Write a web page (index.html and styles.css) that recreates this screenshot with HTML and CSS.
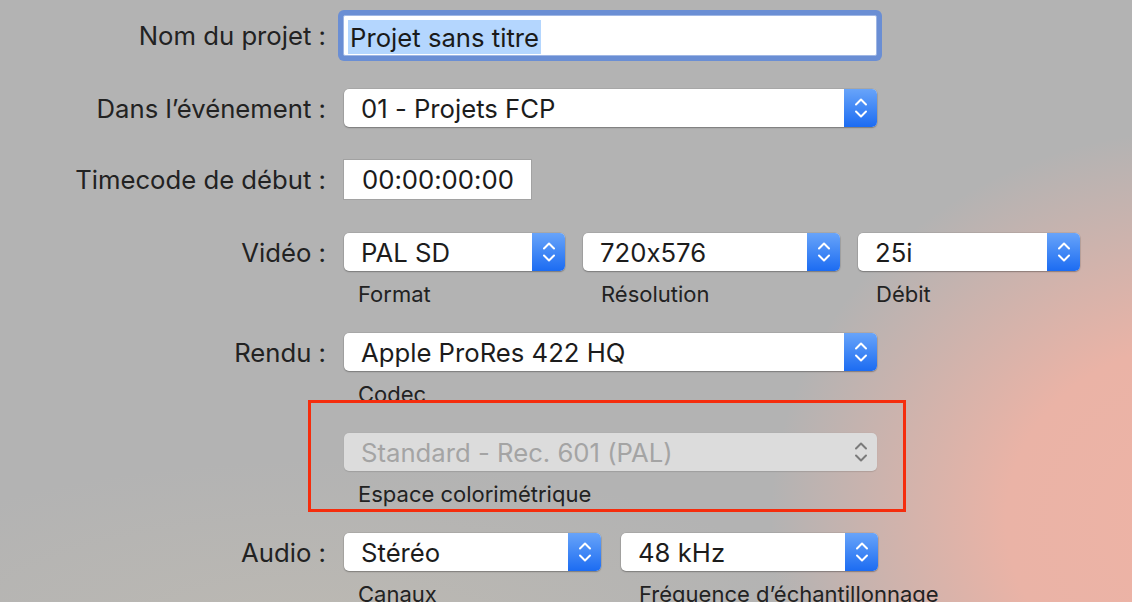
FILE: index.html
```html
<!DOCTYPE html>
<html lang="fr">
<head>
<meta charset="utf-8">
<title>Nouveau projet</title>
<link rel="stylesheet" href="styles.css">
</head>
<body>
<div class="form">
  <div class="row row-name">
    <div class="label tall">Nom du projet :</div>
    <div class="textfield focused"><span class="sel">Projet sans titre</span></div>
  </div>

  <div class="row row-event">
    <div class="label">Dans l’événement :</div>
    <div class="controls">
      <div class="popup wide">
        <span class="value">01 - Projets FCP</span>
        <span class="stepper"><svg viewBox="0 0 14 22" width="14" height="22"><path d="M2 7.5 7 2.5 12 7.5M2 14.5 7 19.5 12 14.5"/></svg></span>
      </div>
    </div>
  </div>

  <div class="row row-tc">
    <div class="label tall">Timecode de début :</div>
    <div class="textfield tc">00:00:00:00</div>
  </div>

  <div class="row row-video">
    <div class="label">Vidéo :</div>
    <div class="controls">
      <div class="group">
        <div class="popup w-format">
          <span class="value">PAL SD</span>
          <span class="stepper"><svg viewBox="0 0 14 22" width="14" height="22"><path d="M2 7.5 7 2.5 12 7.5M2 14.5 7 19.5 12 14.5"/></svg></span>
        </div>
        <div class="caption">Format</div>
      </div>
      <div class="group">
        <div class="popup w-res">
          <span class="value">720x576</span>
          <span class="stepper"><svg viewBox="0 0 14 22" width="14" height="22"><path d="M2 7.5 7 2.5 12 7.5M2 14.5 7 19.5 12 14.5"/></svg></span>
        </div>
        <div class="caption shift">Résolution</div>
      </div>
      <div class="group">
        <div class="popup w-rate">
          <span class="value">25i</span>
          <span class="stepper"><svg viewBox="0 0 14 22" width="14" height="22"><path d="M2 7.5 7 2.5 12 7.5M2 14.5 7 19.5 12 14.5"/></svg></span>
        </div>
        <div class="caption shift">Débit</div>
      </div>
    </div>
  </div>

  <div class="row row-rendu">
    <div class="label">Rendu :</div>
    <div class="controls">
      <div class="group">
        <div class="popup wide">
          <span class="value">Apple ProRes 422 HQ</span>
          <span class="stepper"><svg viewBox="0 0 14 22" width="14" height="22"><path d="M2 7.5 7 2.5 12 7.5M2 14.5 7 19.5 12 14.5"/></svg></span>
        </div>
        <div class="caption">Codec</div>
      </div>
    </div>
  </div>

  <div class="row row-space">
    <div class="label"></div>
    <div class="controls">
      <div class="group">
        <div class="popup wide disabled">
          <span class="value">Standard - Rec. 601 (PAL)</span>
          <span class="stepper"><svg viewBox="0 0 14 22" width="14" height="22"><path d="M2 7.5 7 2.5 12 7.5M2 14.5 7 19.5 12 14.5"/></svg></span>
        </div>
        <div class="caption">Espace colorimétrique</div>
      </div>
    </div>
  </div>

  <div class="row row-audio">
    <div class="label">Audio :</div>
    <div class="controls audio">
      <div class="group">
        <div class="popup w-half">
          <span class="value">Stéréo</span>
          <span class="stepper"><svg viewBox="0 0 14 22" width="14" height="22"><path d="M2 7.5 7 2.5 12 7.5M2 14.5 7 19.5 12 14.5"/></svg></span>
        </div>
        <div class="caption">Canaux</div>
      </div>
      <div class="group">
        <div class="popup w-half">
          <span class="value">48 kHz</span>
          <span class="stepper"><svg viewBox="0 0 14 22" width="14" height="22"><path d="M2 7.5 7 2.5 12 7.5M2 14.5 7 19.5 12 14.5"/></svg></span>
        </div>
        <div class="caption shift">Fréquence d’échantillonnage</div>
      </div>
    </div>
  </div>

  <div class="highlight-box"></div>
</div>
</body>
</html>
```

FILE: styles.css
```css
html, body {
  margin: 0;
  padding: 0;
}

body {
  width: 1132px;
  height: 602px;
  overflow: hidden;
  font-family: Inter, "Helvetica Neue", "Liberation Sans", sans-serif;
  font-feature-settings: "calt" 0;
  color: #222;
  background:
    radial-gradient(ellipse 430px 390px at 1200px 520px, #eeb3a5 0%, #eab3a6 45%, rgba(234, 179, 166, 0) 100%),
    radial-gradient(ellipse 520px 180px at 320px 640px, rgba(196, 190, 178, 0.55), rgba(179, 179, 179, 0)),
    #b3b3b3;
}

.form {
  position: relative;
  padding-top: 15px;
}

.row {
  display: flex;
  column-gap: 17px;
  align-items: flex-start;
}

.label {
  flex: none;
  width: 326px;
  height: 38px;
  line-height: 39px;
  text-align: right;
  font-size: 25.7px;
  color: #222;
  white-space: nowrap;
}

.label.tall {
  height: 41px;
  line-height: 42px;
}

.row-name { margin-bottom: 33px; }
.row-event { margin-bottom: 32px; }
.row-tc { margin-bottom: 33px; }
.row-video,
.row-rendu,
.row-space { margin-bottom: 26px; }

.controls {
  display: flex;
  column-gap: 18px;
  padding-left: 1px;
}

.controls.audio {
  column-gap: 20px;
}

.group {
  display: flex;
  flex-direction: column;
}

/* Text fields */
.textfield {
  box-sizing: border-box;
  height: 41px;
  background: #fff;
  font-size: 25.7px;
  color: #1a1a1a;
  white-space: nowrap;
}

.textfield.focused {
  width: 534px;
  border: 1px solid #9fb6e4;
  border-radius: 2px;
  box-shadow: 0 0 0 5px #6a8ed4;
  padding: 4px 0 0 4px;
}

.sel {
  display: inline-block;
  background: #b4d6fe;
  height: 34px;
  line-height: 35px;
  padding: 0 2px 0 2px;
}

.textfield.tc {
  width: 189px;
  border: 1px solid #a2a2a2;
  line-height: 40px;
  padding-left: 18px;
}

/* Pop-up buttons */
.popup {
  display: flex;
  height: 38px;
  background: #fff;
  border-radius: 5px;
  box-shadow: 0 1px 1.5px rgba(0, 0, 0, 0.28), 0 0 0 0.5px rgba(0, 0, 0, 0.12);
  overflow: hidden;
}

.popup.wide { width: 533px; }
.popup.w-format { width: 221px; }
.popup.w-res { width: 257px; }
.popup.w-rate { width: 222px; }
.popup.w-half { width: 257px; }

.popup .value {
  flex: 1;
  padding-left: 17px;
  font-size: 25.7px;
  line-height: 39px;
  color: #1c1c1c;
  white-space: nowrap;
}

.popup .stepper {
  flex: none;
  width: 33px;
  display: flex;
  align-items: center;
  justify-content: center;
  background: linear-gradient(#68a4f9, #1c6cf2);
}

.popup .stepper svg path {
  fill: none;
  stroke: #fff;
  stroke-width: 2;
  stroke-linecap: round;
  stroke-linejoin: round;
}

.popup.disabled {
  background: #dcdcdc;
  box-shadow: 0 0.5px 1px rgba(0, 0, 0, 0.12);
}

.popup.disabled .value {
  color: #a4a4a4;
}

.popup.disabled .stepper {
  background: transparent;
}

.popup.disabled .stepper svg path {
  stroke: #7b7b7b;
  stroke-width: 2;
}

.caption {
  margin-top: 10px;
  height: 26px;
  line-height: 26px;
  font-size: 22px;
  color: #222;
  padding-left: 14px;
  white-space: nowrap;
}

.caption.shift {
  padding-left: 18px;
}

/* Annotation frame */
.highlight-box {
  position: absolute;
  left: 308px;
  top: 400px;
  width: 598px;
  height: 112px;
  box-sizing: border-box;
  border: 3px solid #f52d0d;
  pointer-events: none;
}
```
